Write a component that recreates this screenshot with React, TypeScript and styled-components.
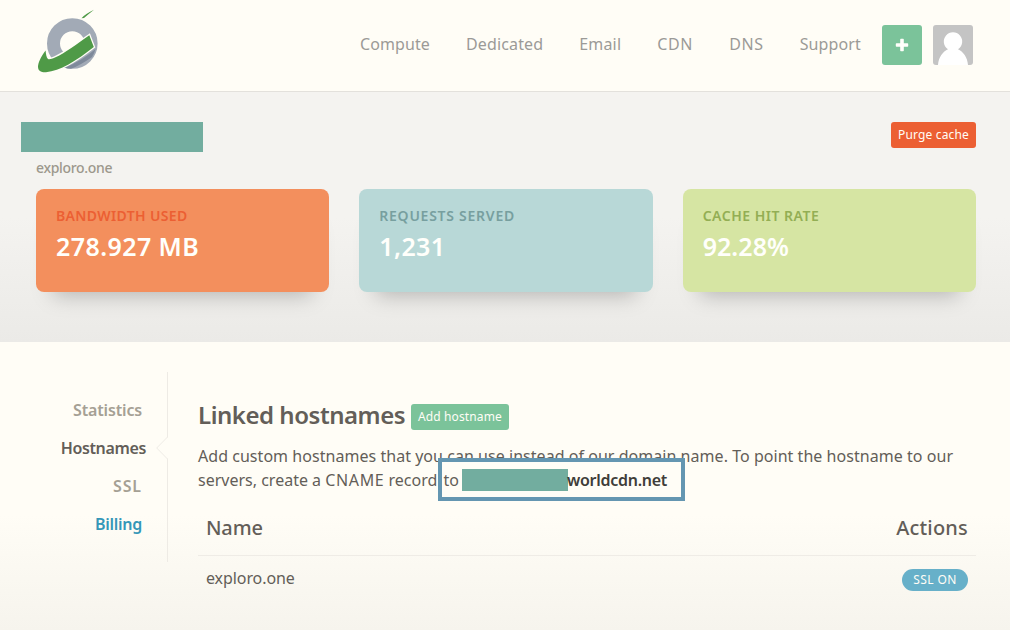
import React from "react";
import styled, { createGlobalStyle } from "styled-components";

const GlobalStyle = createGlobalStyle`
  *, *::before, *::after { box-sizing: border-box; }
  body {
    margin: 0;
    height: 630px;
    overflow: hidden;
    background: #fffdf6;
    color: #635e58;
    font-family: "Noto Sans", "Open Sans", sans-serif;
    font-size: 16px;
    line-height: 24px;
  }
  h1, h2, p { margin: 0; }
`;

const Page = styled.div`
  display: flex;
  flex-direction: column;
  height: 630px;
`;

const Header = styled.header`
  display: flex;
  justify-content: space-between;
  height: 92px;
  padding: 0 37px 0 36px;
  border-bottom: 1px solid #e3e1dc;
`;

const Logo = styled.svg`
  width: 66px;
  height: 68px;
  margin-top: 8px;
`;

const HeaderRight = styled.div`
  display: flex;
  align-items: flex-start;
  padding-top: 25px;
`;

const Nav = styled.nav`
  display: flex;
  gap: 36px;
  margin-right: 21px;
  padding-top: 7px;
`;

const NavLink = styled.a<{ $spacing: number }>`
  color: #9b9a97;
  letter-spacing: ${(p) => p.$spacing}px;
`;

const AddButton = styled.button`
  display: grid;
  place-items: center;
  width: 40px;
  height: 40px;
  margin-right: 11px;
  padding: 0;
  border: 0;
  border-radius: 3px;
  background: #7bc39a;
`;

const Avatar = styled.svg`
  width: 40px;
  height: 40px;
  border-radius: 3px;
  background: #c4c4c4;
`;

const Hero = styled.section`
  height: 250px;
  padding: 30px 34px 0 36px;
  background: linear-gradient(#f4f3f0 0, #f4f3f0 50%, #ebeae7 100%);
`;

const HeroTop = styled.div`
  display: flex;
  justify-content: space-between;
  align-items: flex-start;
`;

const ZoneName = styled.div`
  width: 182px;
  height: 30px;
  margin-left: -15px;
  background: #72ad9f;
`;

const Button = styled.button<{ $color: string; $spacing: number; $width: number }>`
  width: ${(p) => p.$width}px;
  height: 26px;
  padding: 0;
  border: 0;
  border-radius: 3px;
  background: ${(p) => p.$color};
  color: #fffdf6;
  font: 12px/24px "Noto Sans", sans-serif;
  letter-spacing: ${(p) => p.$spacing}px;
  white-space: nowrap;
`;

const Domain = styled.p`
  margin-top: 4px;
  color: #9c988c;
  font-size: 14px;
  font-weight: 500;
  letter-spacing: -0.33px;
`;

const Cards = styled.div`
  display: grid;
  grid-template-columns: repeat(3, 1fr);
  gap: 30px;
  margin-top: 9px;
`;

const Card = styled.article<{ $bg: string }>`
  height: 103px;
  padding: 15px 20px;
  border-radius: 8px;
  background: ${(p) => p.$bg};
  box-shadow: 0 20px 20px -17px rgba(0, 0, 0, 0.25);
`;

const CardLabel = styled.h2<{ $color: string; $spacing: number }>`
  color: ${(p) => p.$color};
  font-size: 14px;
  font-weight: 600;
  letter-spacing: ${(p) => p.$spacing}px;
`;

const CardValue = styled.p<{ $spacing: number }>`
  margin-top: 3px;
  color: #fffffb;
  font-size: 25px;
  font-weight: 600;
  line-height: 30px;
  letter-spacing: ${(p) => p.$spacing}px;
`;

const Content = styled.section`
  display: flex;
  flex: 1;
  padding: 30px 34px 0 36px;
  background: linear-gradient(#fffdf6 0, #fffdf6 60%, #f6f4ed 100%);
`;

const Sidebar = styled.nav`
  position: relative;
  display: flex;
  flex-direction: column;
  align-items: flex-end;
  gap: 14px;
  width: 132px;
  height: 190px;
  padding: 26px 25px 0 0;
  border-right: 1px solid #eeebe5;
`;

const SideLink = styled.a<{ $color: string; $active?: boolean; $spacing: number }>`
  margin-right: ${(p) => (p.$active ? -4 : 0)}px;
  color: ${(p) => p.$color};
  font-weight: 600;
  letter-spacing: ${(p) => p.$spacing}px;
`;

const Notch = styled.svg`
  position: absolute;
  top: 64px;
  right: -1px;
  width: 12px;
  height: 24px;
`;

const Main = styled.main`
  flex: 1;
  padding: 30px 0 0 30px;
`;

const TitleRow = styled.div`
  display: flex;
  align-items: flex-start;
`;

const Title = styled.h1`
  width: 213px;
  padding-bottom: 2px;
  font-size: 24px;
  font-weight: 600;
  line-height: 26px;
  letter-spacing: -0.47px;
  white-space: nowrap;
`;

const TitleButton = styled.div`
  padding-top: 2px;
  line-height: 0;
`;

const Description = styled.p`
  margin-top: 14px;
`;

const Line = styled.span<{ $spacing: number }>`
  display: flex;
  align-items: center;
  height: 24px;
  letter-spacing: ${(p) => p.$spacing}px;
  white-space: pre;
`;

const RecordType = styled.span`
  letter-spacing: 0.65px;
`;

const HiddenPrefix = styled.span`
  width: 106px;
  height: 22px;
  margin: 0 -1px 0 3px;
  background: #72ad9f;
`;

const Host = styled.strong`
  color: #403d39;
  font-weight: 600;
  letter-spacing: -0.28px;
`;

const Highlighted = styled.span`
  position: relative;
  display: flex;
  align-items: center;
  margin-left: 2px;
  &::after {
    content: "";
    position: absolute;
    top: -10px;
    left: -6px;
    width: 247px;
    height: 43px;
    border: 4px solid #6496b1;
  }
`;

const Table = styled.div`
  margin-top: 20px;
`;

const TableHead = styled.div`
  display: flex;
  justify-content: space-between;
  height: 44px;
  padding: 4px 8px 0;
  border-bottom: 1px solid #efece6;
  font-size: 20px;
  font-weight: 500;
`;

const HeadCell = styled.span<{ $spacing: number }>`
  letter-spacing: ${(p) => p.$spacing}px;
`;

const TableRow = styled.div`
  display: flex;
  justify-content: space-between;
  padding: 10px 8px 0;
  letter-spacing: -0.08px;
`;

const Badge = styled.span`
  width: 66px;
  height: 22px;
  margin-top: 3px;
  border-radius: 11px;
  background: #67b0c9;
  color: #fffdf6;
  font-size: 12px;
  line-height: 21px;
  letter-spacing: 0.4px;
  text-align: center;
`;

const navItems = [
  { label: "Compute", spacing: 0.08 },
  { label: "Dedicated", spacing: 0.15 },
  { label: "Email", spacing: 0.16 },
  { label: "CDN", spacing: 0.7 },
  { label: "DNS", spacing: 0.6 },
  { label: "Support", spacing: 0.13 },
];

const stats = [
  { label: "BANDWIDTH USED", value: "278.927 MB", bg: "#f38f5d", color: "#ec5f33", ls: 0.35, vs: 0.42 },
  { label: "REQUESTS SERVED", value: "1,231", bg: "#b8d8d7", color: "#779f9f", ls: 0.74, vs: 0.4 },
  { label: "CACHE HIT RATE", value: "92.28%", bg: "#d6e5a3", color: "#93ae54", ls: 0.5, vs: 0.05 },
];

const sideItems = [
  { label: "Statistics", color: "#a5a094", spacing: -0.15 },
  { label: "Hostnames", color: "#635e58", spacing: -0.36, active: true },
  { label: "SSL", color: "#a5a094", spacing: 0.9 },
  { label: "Billing", color: "#3597b8", spacing: -0.26 },
];

export default function App() {
  return (
    <>
      <GlobalStyle />
      <Page>
        <Header>
          <Logo viewBox="36 8 66 68" aria-label="Logo">
            <circle cx="72.3" cy="43.5" r="18.8" fill="none" stroke="#a2aab6" strokeWidth="13" />
            <path d="M65 67.8Q83 60 95.5 49Q94.5 53 92 57Q80 65.5 71 68.8Q67.5 68.8 65 67.8Z" fill="#7e899a" />
            <path
              d="M45.6 50.5C41 56.5 38 63 38 67C38.2 71 41 72.4 46 72.2C60 71 76 61 93.8 47L89.3 35.2C77 44 65 53 55 57.5C51.5 59 49 59.8 47.8 58.7C46.6 57.5 45.8 54 45.6 50.5Z"
              fill="#4f9a47"
              stroke="#fffdf6"
              strokeWidth="2.6"
              paintOrder="stroke"
            />
            <path d="M81.5 18.2Q84.5 14.5 94 9.8Q89 13.8 84 18Z" fill="#4f9a47" />
          </Logo>
          <HeaderRight>
            <Nav>
              {navItems.map((item) => (
                <NavLink key={item.label} $spacing={item.spacing}>
                  {item.label}
                </NavLink>
              ))}
            </Nav>
            <AddButton aria-label="Add">
              <svg width="14" height="14" viewBox="0 0 14 14">
                <path
                  d="M5.2 1.5Q5.2 .8 5.9 .8H8.1Q8.8 .8 8.8 1.5V5.2H12.5Q13.2 5.2 13.2 5.9V8.1Q13.2 8.8 12.5 8.8H8.8V12.5Q8.8 13.2 8.1 13.2H5.9Q5.2 13.2 5.2 12.5V8.8H1.5Q.8 8.8 .8 8.1V5.9Q.8 5.2 1.5 5.2H5.2Z"
                  fill="#fffffb"
                />
              </svg>
            </AddButton>
            <Avatar viewBox="0 0 40 40">
              <path d="M5 40C5.5 32 10 26.5 15 24.2A9.2 9.2 0 1 1 25 24.2C30 26.5 34.5 32 35 40Z" fill="#fff" />
            </Avatar>
          </HeaderRight>
        </Header>

        <Hero>
          <HeroTop>
            <ZoneName />
            <Button $color="#ec5f33" $spacing={0.16} $width={85}>Purge cache</Button>
          </HeroTop>
          <Domain>exploro.one</Domain>
          <Cards>
            {stats.map((s) => (
              <Card key={s.label} $bg={s.bg}>
                <CardLabel $color={s.color} $spacing={s.ls}>{s.label}</CardLabel>
                <CardValue $spacing={s.vs}>{s.value}</CardValue>
              </Card>
            ))}
          </Cards>
        </Hero>

        <Content>
          <Sidebar>
            {sideItems.map((s) => (
              <SideLink key={s.label} $color={s.color} $active={s.active} $spacing={s.spacing}>
                {s.label}
              </SideLink>
            ))}
            <Notch viewBox="0 0 12 24">
              <path d="M12 1L1 12L12 23Z" fill="#fffdf6" />
              <path d="M11.5 1L0.7 12L11.5 23" fill="none" stroke="#eeebe5" />
            </Notch>
          </Sidebar>
          <Main>
            <TitleRow>
              <Title>Linked hostnames</Title>
              <TitleButton>
                <Button $color="#7bc39a" $spacing={0.12} $width={98}>Add hostname</Button>
              </TitleButton>
            </TitleRow>
            <Description>
              <Line $spacing={0.04}>
                Add custom hostnames that you can use instead of our domain name. To point the hostname to our
              </Line>
              <Line $spacing={0}>
                {"servers, create a "}
                <RecordType>CNAME</RecordType>
                {" record "}
                <Highlighted>
                  to
                  <HiddenPrefix />
                  <Host>worldcdn.net</Host>
                </Highlighted>
              </Line>
            </Description>
            <Table>
              <TableHead>
                <HeadCell $spacing={-0.15}>Name</HeadCell>
                <HeadCell $spacing={0.2}>Actions</HeadCell>
              </TableHead>
              <TableRow>
                <span>exploro.one</span>
                <Badge>SSL ON</Badge>
              </TableRow>
            </Table>
          </Main>
        </Content>
      </Page>
    </>
  );
}
